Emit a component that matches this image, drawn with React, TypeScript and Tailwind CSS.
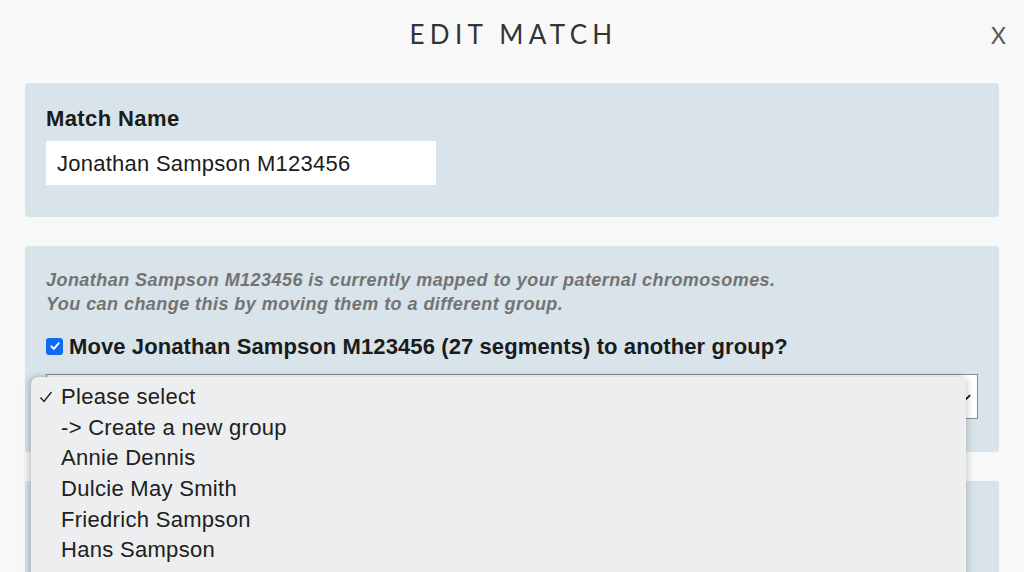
import React from "react";

const items = [
  "Please select",
  "-> Create a new group",
  "Annie Dennis",
  "Dulcie May Smith",
  "Friedrich Sampson",
  "Hans Sampson",
  "Joseph Wandel 1987",
];

export default function App() {
  return (
    <div
      className="relative h-[572px] w-[1024px] overflow-hidden bg-[#f8f8f8]"
      style={{ fontFamily: '"Liberation Sans", Arial, sans-serif' }}
    >
      <div className="relative flex h-[70px] items-center justify-center">
        <h1
          className="pb-[2px] pl-[3px] text-[26px] font-normal tracking-[5.3px] text-[#333333]"
          style={{ fontFamily: 'Lato, "Liberation Sans", sans-serif' }}
        >
          EDIT MATCH
        </h1>
        <span
          className="absolute right-[18px] top-[18px] text-[23px] text-[#5a5a5a]"
          style={{ fontFamily: 'Lato, "Liberation Sans", sans-serif' }}
        >
          X
        </span>
      </div>

      <div className="mx-[25px] mt-[13px] flex flex-col gap-[29px]">
        <section className="rounded-[3px] bg-[#d8e3ea] px-[21px] pb-[32px] pt-[24px]">
          <div className="text-[22px] font-bold leading-[24px] tracking-[0.4px] text-[#1b1b1b]">Match Name</div>
          <div className="mt-[10px] flex h-[44px] w-[390px] items-center bg-white px-[11px] text-[22px] tracking-[0.25px] text-[#1b1b1b]">
            Jonathan Sampson M123456
          </div>
        </section>

        <section className="relative rounded-[3px] bg-[#d8e3ea] px-[21px] pb-[33px] pt-[22px]">
          <p className="whitespace-nowrap text-[18px] font-bold italic leading-[24px] tracking-[0.45px] text-[#737373]">
            Jonathan Sampson M123456 is currently mapped to your paternal chromosomes.
            <br />
            You can change this by moving them to a different group.
          </p>
          <div className="mt-[18px] flex h-[24px] items-center gap-[6px]">
            <span className="flex h-[17px] w-[17px] shrink-0 items-center justify-center rounded-[3px] bg-[#0b6cf5]">
              <svg viewBox="0 0 12 12" className="h-[12px] w-[12px]">
                <path d="M2.3 6.3 L4.9 8.9 L9.8 3.2" fill="none" stroke="white" strokeWidth="1.9" strokeLinecap="round" strokeLinejoin="round" />
              </svg>
            </span>
            <span className="whitespace-nowrap text-[22px] font-bold tracking-[0.1px] text-[#1b1b1b]">
              Move Jonathan Sampson M123456 (27 segments) to another group?
            </span>
          </div>
          <div className="mt-[16px] flex h-[45px] w-[932px] items-center justify-end border border-[#8a8a8a] bg-white pr-[6px]">
            <svg viewBox="0 0 10 8" className="h-[8px] w-[9px]">
              <path d="M1 2 L5 6 L9 2" fill="none" stroke="#111" strokeWidth="2" />
            </svg>
          </div>
        </section>

        <section className="h-[120px] rounded-[3px] bg-[#d8e3ea]" />
      </div>

      <div className="absolute left-[31px] top-[377px] h-[220px] w-[935px] rounded-t-[7px] bg-[#eceeef] pt-[4px] shadow-[-3px_0_6px_rgba(0,0,0,0.18),3px_0_6px_rgba(0,0,0,0.12)]">
        {items.map((t, i) => (
          <div key={t} className="relative flex h-[30.7px] items-center whitespace-nowrap pl-[30px] text-[22px] tracking-[0.3px] text-[#202020]">
            {i === 0 && (
              <svg viewBox="0 0 14 14" className="absolute left-[8px] top-[9px] h-[14px] w-[14px]">
                <path d="M1.5 7.5 L5 11.5 L12.5 2" fill="none" stroke="#222" strokeWidth="1.4" />
              </svg>
            )}
            {t}
          </div>
        ))}
      </div>
    </div>
  );
}
